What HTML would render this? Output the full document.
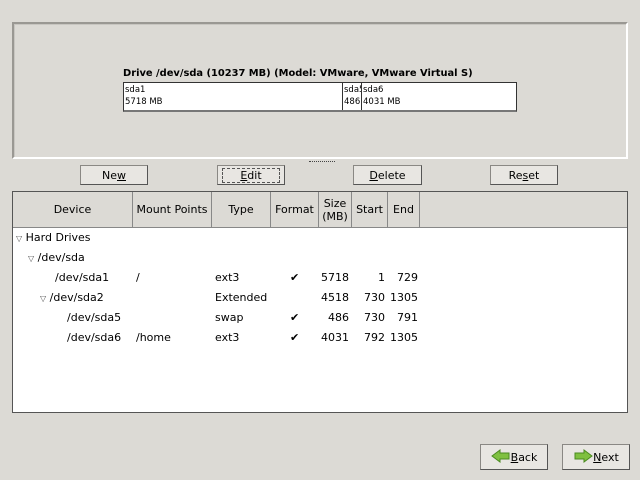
<!DOCTYPE html>
<html><head><style>
body{margin:0;width:640px;height:480px;background:#dcdad5;font-family:"DejaVu Sans","Liberation Sans",sans-serif;font-size:11px;color:#000;position:relative;overflow:hidden}
.a{position:absolute}
.frame{left:12px;top:22px;width:612px;height:133px;border:2px solid #9a9893;border-right-color:#fff;border-bottom-color:#fff;box-shadow:inset 1px 1px 0 #c8c6c1}
.btn{position:absolute;height:20px;border:1px solid #8a8884;border-right-color:#555;border-bottom-color:#555;background:#e8e6e2;text-align:center;line-height:20px;font-size:11px;box-sizing:border-box}
.bar{left:123px;top:82px;width:392px;height:27px;border:1px solid #333;background:#fff;border-bottom:2px solid #777}
.seg{position:absolute;top:0;height:27px;font-size:8.5px;line-height:12px;padding:1px;box-sizing:border-box;overflow:hidden;white-space:nowrap}
.tree{left:12px;top:191px;width:614px;height:220px;border:1px solid #555;background:#fff}
.hdr{position:absolute;top:0;height:36px;background:#dcdad5;border-bottom:1px solid #888;border-right:1px solid #888;box-sizing:border-box;display:flex;align-items:center;justify-content:center;text-align:center;line-height:13px}
.r{position:absolute;font-size:11px;white-space:nowrap}
.n{position:absolute;font-size:11px;white-space:nowrap;text-align:right;width:40px}
u{text-decoration:underline}
</style></head><body>
<div class="a frame"></div>
<div class="a" style="left:123px;top:68px;font-weight:bold;font-size:9.9px">Drive /dev/sda (10237 MB) (Model: VMware, VMware Virtual S)</div>
<div class="a bar">
<div class="seg" style="left:0;width:219px;border-right:1px solid #333">sda1<br>5718 MB</div>
<div class="seg" style="left:219px;width:19px;border-right:1px solid #333">sda5<br>486</div>
<div class="seg" style="left:238px;width:154px">sda6<br>4031 MB</div>
</div>
<div class="a" style="left:309px;top:161px;width:26px;border-top:1px dotted #444"></div>
<div class="btn" style="left:80px;top:165px;width:68px">Ne<u>w</u></div>
<div class="btn" style="left:217px;top:165px;width:68px"><span style="border:1px dashed #555;padding:0 17px"><u>E</u>dit</span></div>
<div class="btn" style="left:353px;top:165px;width:69px"><u>D</u>elete</div>
<div class="btn" style="left:490px;top:165px;width:68px">Re<u>s</u>et</div>
<div class="a tree">
<div class="hdr" style="left:0;width:120px">Device</div>
<div class="hdr" style="left:120px;width:79px">Mount Points</div>
<div class="hdr" style="left:199px;width:59px">Type</div>
<div class="hdr" style="left:258px;width:48px">Format</div>
<div class="hdr" style="left:306px;width:33px">Size<br>(MB)</div>
<div class="hdr" style="left:339px;width:36px">Start</div>
<div class="hdr" style="left:375px;width:32px">End</div>
<div class="hdr" style="left:407px;width:207px;border-right:none"></div>
<div class="r" style="left:3px;top:39px"><span style="font-size:8px;color:#555">▽</span> Hard Drives</div>
<div class="r" style="left:15px;top:59px"><span style="font-size:8px;color:#555">▽</span> /dev/sda</div>
<div class="r" style="left:42px;top:79px">/dev/sda1</div><div class="r" style="left:123px;top:79px">/</div><div class="r" style="left:202px;top:79px">ext3</div><div class="r" style="left:277px;top:79px">✔</div><div class="n" style="left:296px;top:79px">5718</div><div class="n" style="left:332px;top:79px">1</div><div class="n" style="left:365px;top:79px">729</div>
<div class="r" style="left:27px;top:99px"><span style="font-size:8px;color:#555">▽</span> /dev/sda2</div><div class="r" style="left:202px;top:99px">Extended</div><div class="n" style="left:296px;top:99px">4518</div><div class="n" style="left:332px;top:99px">730</div><div class="n" style="left:365px;top:99px">1305</div>
<div class="r" style="left:54px;top:119px">/dev/sda5</div><div class="r" style="left:202px;top:119px">swap</div><div class="r" style="left:277px;top:119px">✔</div><div class="n" style="left:296px;top:119px">486</div><div class="n" style="left:332px;top:119px">730</div><div class="n" style="left:365px;top:119px">791</div>
<div class="r" style="left:54px;top:139px">/dev/sda6</div><div class="r" style="left:123px;top:139px">/home</div><div class="r" style="left:202px;top:139px">ext3</div><div class="r" style="left:277px;top:139px">✔</div><div class="n" style="left:296px;top:139px">4031</div><div class="n" style="left:332px;top:139px">792</div><div class="n" style="left:365px;top:139px">1305</div>
</div>
<div class="btn" style="left:480px;top:444px;width:68px;height:26px;line-height:26px"><svg width="20" height="14" style="vertical-align:-2px"><path d="M1 7 L9 1 V4 H18 V10 H9 V13 Z" fill="#7fc040" stroke="#4a8a20"/></svg><u>B</u>ack</div>
<div class="btn" style="left:562px;top:444px;width:68px;height:26px;line-height:26px"><svg width="20" height="14" style="vertical-align:-2px"><path d="M19 7 L11 1 V4 H2 V10 H11 V13 Z" fill="#7fc040" stroke="#4a8a20"/></svg><u>N</u>ext</div>
</body></html>
